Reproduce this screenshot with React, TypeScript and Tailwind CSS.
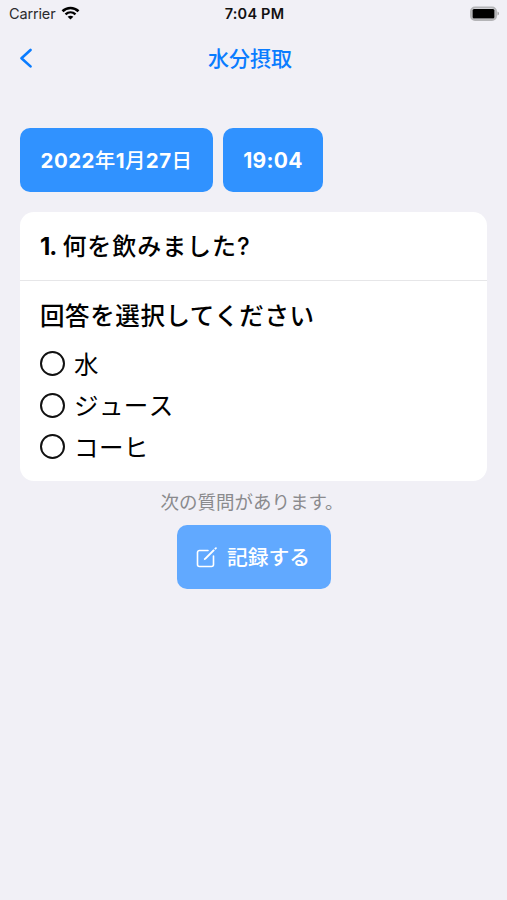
const options = ["水", "ジュース", "コーヒ"];

const StatusBar = () => {
  return (
    <div className="grid grid-cols-3 items-center h-7 pl-[9px] pr-[7px]">
      <div className="flex items-center gap-[6px]">
        <span className="text-[14.5px] leading-5 tracking-[-0.15px] text-[#2b2b2d]">
          Carrier
        </span>
        <svg
          className="-mt-[2px]"
          width="19"
          height="14"
          viewBox="0 0 18 14"
          fill="none">
          <path
            d="M1 5.2C5.5.9 12.5.9 17 5.2"
            stroke="#000"
            strokeWidth="2.6"
          />
          <path
            d="M4 8.4c2.9-2.7 7.1-2.7 10 0"
            stroke="#000"
            strokeWidth="2.4"
          />
          <path d="M9 13.6 6.1 10.8c1.7-1.5 4.1-1.5 5.8 0Z" fill="#000" />
        </svg>
      </div>
      <span className="text-center text-[14.5px] leading-5 tracking-[0.2px] font-semibold text-[#111]">
        7:04 PM
      </span>
      <svg
        className="justify-self-end -mt-px"
        width="31"
        height="16"
        viewBox="0 0 31 16"
        fill="none">
        <rect
          x="2"
          y="1.5"
          width="25"
          height="12.5"
          rx="4"
          stroke="#b4b4b7"
          strokeWidth="2"
        />
        <rect x="3.5" y="3" width="22" height="9.5" rx="1.5" fill="#000" />
        <path d="M28.5 5.5c2 .8 2 3.2 0 4Z" fill="#a0a0a3" />
      </svg>
    </div>
  );
};

const Header = () => {
  return (
    <header className="grid grid-cols-[60px_1fr_67px] items-center h-[60px] text-[#0a7cff]">
      <button className="pl-[19px]" aria-label="戻る">
        <svg width="14" height="20" viewBox="0 0 14 20" fill="none">
          <path
            d="M11.500 2 2.500 10.200l9 8.200"
            stroke="currentColor"
            strokeWidth="2.6"
            strokeLinecap="round"
            strokeLinejoin="round"
          />
        </svg>
      </button>
      <h1 className="pt-px text-center text-[21px] leading-[30px] font-medium">
        水分摂取
      </h1>
    </header>
  );
};

const App = () => {
  return (
    <main className="min-h-screen bg-[#f1f0f6] font-['Inter','Noto_Sans_CJK_JP',sans-serif] text-black">
      <StatusBar />
      <Header />
      <div className="flex flex-row gap-[10px] px-5 mt-10">
        <button className="w-[193px] h-16 pt-[2px] rounded-[10px] bg-[#3092ff] text-white text-[20.5px] tracking-[0.4px] font-bold whitespace-nowrap">
          2022<span className="font-medium">年</span>1
          <span className="font-medium">月</span>27
          <span className="font-medium">日</span>
        </button>
        <button className="w-[100px] h-16 pt-[2px] rounded-[10px] bg-[#3092ff] text-white text-[21px] tracking-[0.3px] font-bold">
          19:04
        </button>
      </div>
      <section className="mx-5 mt-5 h-[269px] rounded-[14px] bg-white">
        <h2 className="flex items-center h-[69px] px-5 pt-[2px] border-b border-[#e6e6e8] text-[24px] font-medium">
          <span className="font-bold tracking-[-1px] mr-[6px]">1.</span>
          <span className="tracking-[0.95px]">何を飲みました?</span>
        </h2>
        <div className="px-5 pt-4">
          <h3 className="pt-px text-[24.5px] leading-9 tracking-[0.6px] font-medium">
            回答を選択してください
          </h3>
          <ul className="mt-[9px]">
            {options.map((option) => (
              <li key={option} className="flex items-center gap-[9px] h-[41.5px]">
                <span className="size-[25px] rounded-full border-2 border-[#111]"></span>
                <span className="pt-[2px] text-[24.5px] leading-9 tracking-[0.4px] [font-kerning:none]">
                  {option}
                </span>
              </li>
            ))}
          </ul>
        </div>
      </section>
      <div className="flex flex-col items-center">
        <p className="mt-[7px] mr-[3px] text-[18.5px] leading-7 text-[#8a8a8d]">
          次の質問があります。
        </p>
        <button className="flex items-center justify-center gap-[10px] mt-[9px] w-[154px] h-16 pr-[2px] rounded-[10px] bg-[#61a9ff] text-white">
          <svg
            className="mt-px"
            width="22"
            height="22"
            viewBox="0 0 22 22"
            fill="none">
            <path
              d="M13 3.500H4.500A2 2 0 0 0 2.500 5.500v12A2 2 0 0 0 4.500 19.500h12a2 2 0 0 0 2-2V9"
              stroke="currentColor"
              strokeWidth="1.600"
              strokeLinecap="round"
            />
            <path
              d="m8.700 13.300.7-2.100 9-9 1.400 1.400-9 9Z"
              fill="currentColor"
            />
            <path
              d="m20.400 1.700.5-.5"
              stroke="currentColor"
              strokeWidth="1.900"
              strokeLinecap="round"
            />
          </svg>
          <span className="pt-[2px] text-[20.8px] leading-8 font-medium">
            記録する
          </span>
        </button>
      </div>
    </main>
  );
};

export default App;
